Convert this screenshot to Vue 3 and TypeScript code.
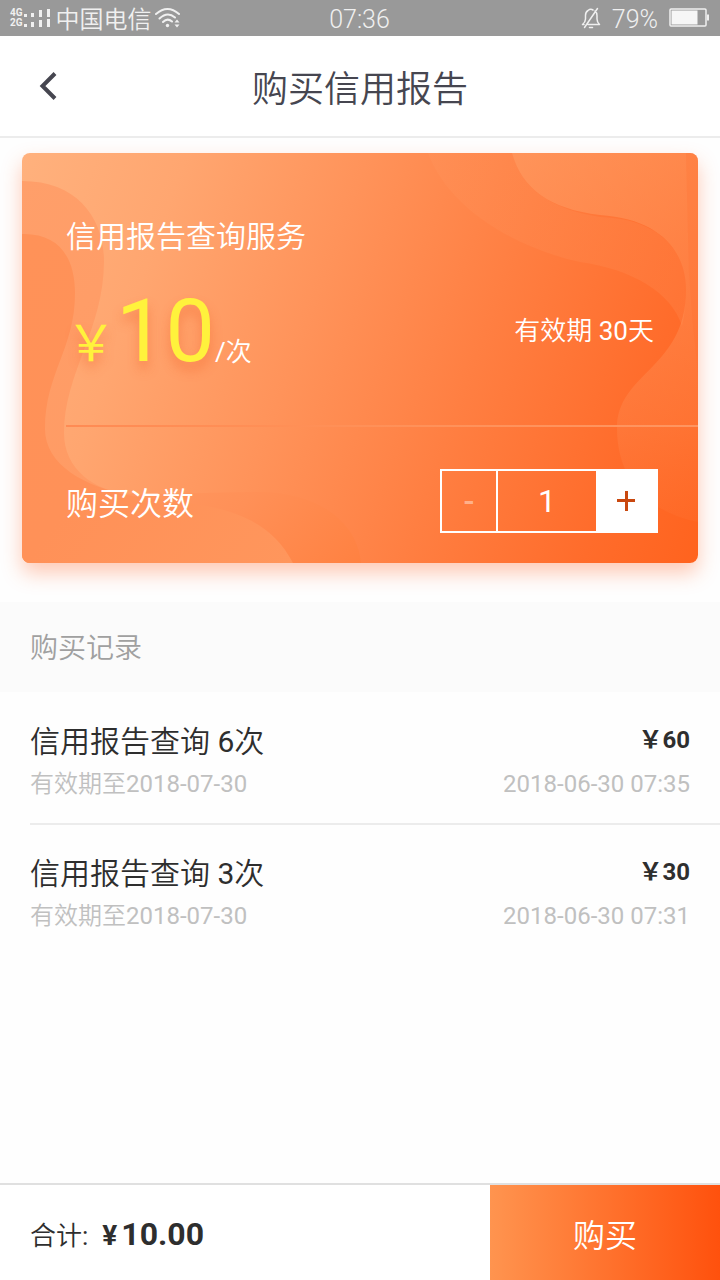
<script setup lang="ts">
import { computed, ref } from 'vue'

interface PurchaseRecord {
  id: number
  count: number
  price: number
  expires: string
  time: string
}

const unitPrice = 10
const quantity = ref<number>(1)
const total = computed<string>(() => (unitPrice * quantity.value).toFixed(2))

const records: PurchaseRecord[] = [
  { id: 1, count: 6, price: 60, expires: '2018-07-30', time: '2018-06-30 07:35' },
  { id: 2, count: 3, price: 30, expires: '2018-07-30', time: '2018-06-30 07:31' },
]

function decrease(): void {
  if (quantity.value > 1) quantity.value -= 1
}

function increase(): void {
  quantity.value += 1
}
</script>

<template>
  <div class="page">
    <div class="status">
      <div class="status-side">
        <span class="network"><span>4G</span><span>2G</span></span>
        <svg class="signal" width="26" height="18" viewBox="0 0 26 18" fill="#f0f0f0" aria-hidden="true">
          <path d="M0 5h3v3H0zM7 4h3v4H7zM15 1h3v7h-3zM23 0h3v8h-3zM0 15h3v3H0zM7 13h3v5H7zM15 11h3v7h-3zM23 10h3v8h-3z" />
        </svg>
        <span class="carrier">中国电信</span>
        <svg width="26" height="22" viewBox="0 0 26 22" fill="none" stroke="#f0f0f0" stroke-width="2" stroke-linecap="round" aria-hidden="true">
          <path d="M1 7Q12.500 -3 24 7M4.500 11.500Q12.500 4 20 10.500M8 15Q12.500 10.500 17 14.500" />
          <circle cx="12.500" cy="18.500" r="1.700" fill="#f0f0f0" stroke="none" />
          <path d="M19.500 15.500L22 12.500 24.500 15.500zM19.500 17.500L22 20.500 24.500 17.500z" fill="#f0f0f0" stroke="none" />
        </svg>
      </div>
      <span class="clock">07:36</span>
      <div class="status-side status-right">
        <svg width="20" height="22" viewBox="0 0 20 22" fill="none" stroke="#f0f0f0" stroke-width="1.500" stroke-linecap="round" stroke-linejoin="round" aria-hidden="true">
          <path d="M7 17.500H18.500Q16 15 16 12V8.500Q16 5.500 14 4M12 3Q9.500 1.500 7 3.500 4.500 5 4.500 8.500V12Q4.500 15 1.500 17.500H3M16.500 1.500L3.500 20.500M8.500 20.500H11.500" />
        </svg>
        <span class="percent">79%</span>
        <svg width="40" height="20" viewBox="0 0 40 20" aria-hidden="true">
          <rect x="1" y="1" width="36" height="17" rx="1" fill="none" stroke="#f0f0f0" stroke-width="1.500" />
          <rect x="2.500" y="2.500" width="26" height="14" fill="#f6f6f6" />
          <rect x="38" y="6.500" width="2" height="6" fill="#f0f0f0" />
        </svg>
      </div>
    </div>

    <header class="header">
      <button class="back" type="button" aria-label="返回">
        <svg width="18" height="28" viewBox="0 0 18 28" fill="none" stroke="#464650" stroke-width="4" aria-hidden="true">
          <path d="M16 1.500L3.500 14 16 26.500" />
        </svg>
      </button>
      <h1>购买信用报告</h1>
    </header>

    <main>
      <section class="card">
        <svg class="waves" viewBox="0 0 676 410" preserveAspectRatio="none" aria-hidden="true">
          <defs>
            <linearGradient id="outer" x1="0" y1="0" x2="1" y2="1">
              <stop offset="0" stop-color="#ff9f6a" />
              <stop offset="0.500" stop-color="#ff9b64" />
              <stop offset="0.750" stop-color="#ff9057" />
              <stop offset="1" stop-color="#ff8141" />
            </linearGradient>
            <linearGradient id="inner" x1="0" y1="0" x2="1" y2="1">
              <stop offset="0" stop-color="#ff9258" />
              <stop offset="0.500" stop-color="#ff9158" />
              <stop offset="1" stop-color="#ff965c" />
            </linearGradient>
            <linearGradient id="corner" x1="0" y1="0" x2="0" y2="1">
              <stop offset="0" stop-color="#ffb27c" stop-opacity="0.360" />
              <stop offset="0.350" stop-color="#ffa872" stop-opacity="0.320" />
              <stop offset="0.750" stop-color="#ff9a62" stop-opacity="0.220" />
              <stop offset="1" stop-color="#ff8a50" stop-opacity="0.100" />
            </linearGradient>
            <linearGradient id="band" x1="0" y1="0" x2="1" y2="1">
              <stop offset="0" stop-color="#ffa06a" stop-opacity="0.140" />
              <stop offset="1" stop-color="#ff8a50" stop-opacity="0.300" />
            </linearGradient>
          </defs>
          <path fill="url(#outer)" d="M0 28C56 28 82 66 82 108C82 176 42 220 42 280C42 316 72 339 110 341C150 342 185 339 238 339C292 339 335 366 339 410H0Z" />
          <path fill="url(#inner)" d="M0 81C38 80 53 106 53 140C53 196 23 220 23 276C23 312 63 334 110 343C174 352 240 350 271 410H0Z" />
          <path fill="url(#band)" d="M406 0C426 54 490 94 558 109C610 116 650 140 660 173Q664 155 664 137C664 100 640 66 578 64C528 56 500 36 490 0Z" />
          <path fill="url(#corner)" d="M490 0C500 36 528 56 578 62C640 66 664 100 664 137C664 215 595 220 595 275C595 330 630 360 676 369V0Z" />
          <path fill="#ff7031" fill-opacity="0.250" d="M664 0H676V220Q670 170 667 120Z" />
        </svg>
        <h2>信用报告查询服务</h2>
        <div class="offer">
          <p class="price"><span class="yen">￥</span><span class="amount">10</span><span class="unit">/次</span></p>
          <p class="validity">有效期 30天</p>
        </div>
        <div class="rule"></div>
        <div class="order">
          <label for="quantity">购买次数</label>
          <div class="stepper">
            <button class="minus" type="button" aria-label="减少" :disabled="quantity <= 1" @click="decrease">-</button>
            <input id="quantity" v-model.number="quantity" type="text" inputmode="numeric" />
            <button class="plus" type="button" aria-label="增加" @click="increase">
              <svg width="18" height="20" viewBox="0 0 18 20" fill="#c9480f" aria-hidden="true">
                <path d="M8 0h3v20H8zM0 8h18v3H0z" />
              </svg>
            </button>
          </div>
        </div>
      </section>

      <section>
        <h2 class="section-title">购买记录</h2>
        <ul class="records">
          <li v-for="record in records" :key="record.id">
            <span class="name">信用报告查询 {{ record.count }}次</span>
            <strong class="paid">￥{{ record.price }}</strong>
            <span class="meta">有效期至{{ record.expires }}</span>
            <time class="meta">{{ record.time }}</time>
          </li>
        </ul>
      </section>
    </main>

    <footer class="footer">
      <p class="total"><span>合计:</span><strong><span class="total-yen">¥</span>{{ total }}</strong></p>
      <button class="buy" type="button">购买</button>
    </footer>
  </div>
</template>

<style>
body {
  margin: 0;
}
</style>

<style scoped>
.page {
  display: flex;
  flex-direction: column;
  min-height: 100vh;
  background: #fefefe;
  color: #2e2e2e;
  font-family: Roboto, "Noto Sans CJK SC DemiLight", "Noto Sans CJK SC", sans-serif;
  font-weight: 400;
}

h1,
h2,
p,
ul {
  margin: 0;
  padding: 0;
  font-weight: 400;
}

button,
input {
  margin: 0;
  padding: 0;
  border: 0;
  border-radius: 0;
  font: inherit;
}

strong {
  font-family: Roboto, "Noto Sans CJK SC", sans-serif;
  font-weight: 700;
}

.status {
  display: grid;
  grid-template-columns: 1fr auto 1fr;
  align-items: center;
  height: 36px;
  padding: 0 11px 0 10px;
  background: #999;
  color: #f0f0f0;
  font-size: 24px;
  line-height: 32px;
}

.status-side {
  display: flex;
  align-items: center;
}

.status-right {
  justify-content: flex-end;
}

.network {
  display: flex;
  flex-direction: column;
  font-size: 10px;
  font-weight: 700;
  line-height: 10px;
}

.signal {
  margin: 0 6px 0 1px;
}

.carrier {
  padding-top: 4px;
  margin-right: 3px;
}

.clock,
.percent {
  padding-top: 4px;
  font-size: 25px;
  font-weight: 300;
}

.percent {
  margin: 0 11px;
}

.header {
  display: grid;
  grid-template-columns: 96px 1fr 96px;
  align-items: center;
  height: 100px;
  border-bottom: 2px solid #ececec;
  background: #fff;
}

.header h1 {
  padding-top: 8px;
  color: #464650;
  font-size: 36px;
  line-height: 52px;
  text-align: center;
}

.back {
  display: flex;
  align-items: center;
  justify-content: center;
  height: 100px;
  background: none;
}

.card {
  position: relative;
  margin: 15px 22px 0;
  border-radius: 8px;
  background: linear-gradient(110deg, #ffb17d 0%, #ffa670 20%, #ff935a 42%, #ff7f42 64%, #ff6c2b 86%, #ff631e 100%);
  box-shadow: 0 10px 20px rgba(255, 100, 40, 0.34);
  color: #fff;
}

.waves {
  position: absolute;
  inset: 0;
  width: 100%;
  height: 100%;
  border-radius: 8px;
}

.card > :not(.waves) {
  position: relative;
}

.card h2 {
  padding: 62px 44px 0;
  font-size: 30px;
  line-height: 44px;
}

.offer {
  display: flex;
  align-items: center;
  justify-content: space-between;
  height: 138px;
  padding: 0 44px 4px;
}

.price {
  display: flex;
  align-items: baseline;
  padding-top: 26px;
  line-height: 104px;
}

.yen,
.amount {
  color: #fff23c;
  text-shadow: 0 8px 12px rgba(240, 90, 30, 0.4);
}

.yen {
  font-family: "Noto Sans CJK SC", sans-serif;
  font-size: 50px;
}

.amount {
  font-size: 88px;
}

.unit,
.validity {
  font-size: 26px;
}

.rule {
  height: 2px;
  margin: 24px 0 0 44px;
  background: linear-gradient(90deg, #ff8b54, #ff8f56 35%, #ff9560);
}

.order {
  display: flex;
  align-items: center;
  justify-content: space-between;
  padding: 42px 40px 30px 44px;
  font-size: 32px;
}

.stepper {
  display: grid;
  grid-template-columns: 56px 98px 60px;
  height: 60px;
  border: 2px solid #fff;
}

.stepper button {
  display: flex;
  align-items: center;
  justify-content: center;
}

.stepper .minus {
  border-right: 2px solid #fff;
  background: none;
  color: #ffb08a;
  font-size: 32px;
  font-weight: 500;
}

.stepper input {
  min-width: 0;
  background: none;
  color: #fff;
  text-align: center;
}

.stepper .plus {
  background: #fff;
}

.section-title {
  margin-top: 39px;
  padding: 4px 30px 0;
  background: #fbfbfb;
  color: #a0a0a0;
  font-size: 28px;
  line-height: 86px;
}

.records {
  list-style: none;
}

.records li {
  display: grid;
  grid-template-columns: 1fr auto;
  margin-left: 30px;
  padding: 28px 30px 19px 0;
  border-bottom: 2px solid #ececec;
}

.records li + li {
  padding-top: 27px;
}

.records li:last-child {
  border-bottom: 0;
}

.name {
  font-size: 30px;
  line-height: 44px;
}

.paid {
  font-size: 24px;
  line-height: 40px;
  text-align: right;
}

.meta {
  color: #c0c0c0;
  font-size: 24px;
  line-height: 40px;
}

time.meta {
  text-align: right;
}

.footer {
  display: grid;
  grid-template-columns: 1fr 230px;
  height: 95px;
  margin-top: auto;
  border-top: 2px solid #e0e0e0;
  background: #fff;
}

.total {
  display: flex;
  align-items: baseline;
  gap: 14px;
  padding: 27px 0 0 30px;
  font-size: 26px;
  line-height: 44px;
}

.total strong {
  font-size: 32px;
}

.total-yen {
  margin-right: 4px;
  font-size: 28px;
}

.buy {
  background: linear-gradient(90deg, #ff944f, #ff510d);
  color: #fff;
  font-size: 32px;
}
</style>
